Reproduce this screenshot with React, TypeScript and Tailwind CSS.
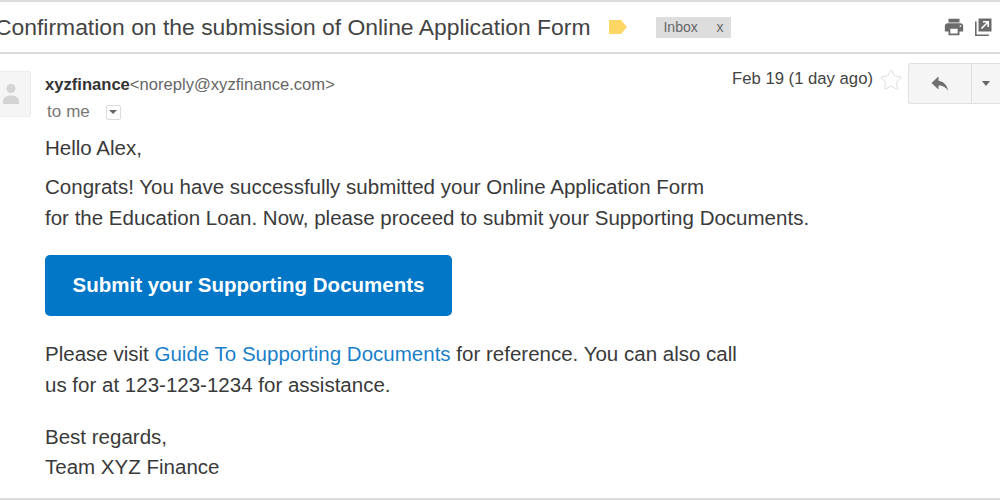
import { Star } from "lucide-react";

function PrintIcon() {
  return (
    <svg viewBox="0 0 24 24" className="h-[22px] w-[22px]" fill="#6b6b6b">
      <path d="M19 8H5c-1.66 0-3 1.34-3 3v6h4v4h12v-4h4v-6c0-1.66-1.34-3-3-3zm-3 11H8v-5h8v5zm3-7c-.55 0-1-.45-1-1s.45-1 1-1 1 .45 1 1-.45 1-1 1zm-1-9H6v4h12V3z" />
    </svg>
  );
}

function PopoutIcon() {
  return (
    <svg viewBox="0 0 17 18" className="h-[18px] w-[17px]" fill="none">
      <path d="M3.5 0.5h13v13h-13z" fill="#6b6b6b" />
      <path d="M0.8 3.5v13.7h13" stroke="#6b6b6b" strokeWidth="1.6" />
      <path d="M6.5 10.5 12.5 4.5M8 3.8h5.2V9" stroke="#fff" strokeWidth="1.6" />
    </svg>
  );
}

function ReplyIcon() {
  return (
    <svg viewBox="0 0 18 16" className="h-[16px] w-[18px]" fill="#6e6e6e">
      <path d="M7.5 0.5 0.5 7l7 6.5V9.6c4.2 0 7.2 1.4 9.5 5.4-.6-5.4-3.8-9.6-9.5-10.3z" />
    </svg>
  );
}

function Avatar() {
  return (
    <div className="flex h-[46px] w-[31px] shrink-0 items-center justify-start rounded-r-[2px] border border-l-0 border-[#ececec] bg-[#f5f5f5]">
      <svg viewBox="0 0 20 24" className="ml-[1px] h-[24px] w-[20px]" fill="#d4d4d4">
        <circle cx="10" cy="6.5" r="4.5" />
        <path d="M2 22v-3.5c0-3 4-5 8-5s8 2 8 5V22z" />
      </svg>
    </div>
  );
}

export default function App() {
  return (
    <div className="h-[500px] w-[1000px] overflow-hidden bg-white font-['Liberation_Sans',Arial,sans-serif] text-[#3a3a3a]">
      <header className="flex h-[54px] items-center border-y-2 border-[#dcdcdc] pr-[8px]">
        <h1 className="-ml-[5px] whitespace-nowrap text-[22.9px] font-normal text-[#444]">
          Confirmation on the submission of Online Application Form
        </h1>
        <svg viewBox="0 0 18 14" className="ml-[19px] h-[14px] w-[18px]" fill="#fdd663">
          <path d="M0 0h12l6 7-6 7H0z" />
        </svg>
        <div className="ml-[29px] flex h-[21px] w-[75px] items-center justify-between bg-[#dddddd] pl-[7px] pr-[8px] text-[14px] text-[#666]">
          <span>Inbox</span>
          <span>x</span>
        </div>
        <div className="ml-auto flex items-center gap-[10px]">
          <PrintIcon />
          <PopoutIcon />
        </div>
      </header>

      <div className="flex items-start pt-[9px]">
        <div className="pt-[8px]">
          <Avatar />
        </div>
        <div className="ml-[14px] pt-[12px]">
          <div className="whitespace-nowrap text-[16.6px] leading-[20px] text-[#666]">
            <span className="font-bold text-[#333]">xyzfinance</span>
            &lt;noreply@xyzfinance.com&gt;
          </div>
          <div className="ml-[2px] mt-[7px] flex items-center text-[17px] leading-[20px] text-[#777]">
            <span>to</span>
            <span className="ml-[5px]">me</span>
            <span className="ml-[16px] flex h-[15px] w-[15px] items-center justify-center rounded-[2px] border border-[#dcdcdc]">
              <span className="h-0 w-0 border-x-[4px] border-t-[4px] border-x-transparent border-t-[#666]" />
            </span>
          </div>
        </div>
        <div className="ml-auto flex items-start">
          <span className="mt-[6px] whitespace-nowrap text-[16.7px] leading-[20px] text-[#444]">
            Feb 19 (1 day ago)
          </span>
          <Star className="ml-[6px] mt-[5px] h-[24px] w-[24px] text-[#dedede]" strokeWidth={1} />
          <div className="ml-[5px] flex h-[41px] w-[92px] rounded-l-[3px] border border-r-0 border-[#e0e0e0] bg-[#f5f5f5]">
            <div className="flex w-[63px] items-center justify-center border-r border-[#e0e0e0]">
              <ReplyIcon />
            </div>
            <div className="flex flex-1 items-center justify-center">
              <span className="h-0 w-0 border-x-[4px] border-t-[5px] border-x-transparent border-t-[#666]" />
            </div>
          </div>
        </div>
      </div>

      <main className="pl-[45px] text-[20.52px] leading-[31px] text-[#3a3a3a]">
        <p className="mt-[10px]">Hello Alex,</p>
        <p className="mt-[8px]">
          Congrats! You have successfully submitted your Online Application Form
          <br />
          for the Education Loan. Now, please proceed to submit your Supporting Documents.
        </p>
        <div className="mt-[22px] flex h-[61px] w-[407px] items-center justify-center rounded-[5px] bg-[#0277c7] pb-[3px] text-[20.5px] font-bold text-white">
          Submit your Supporting Documents
        </div>
        <p className="mt-[22px]">
          Please visit <span className="text-[#1a7fc9]">Guide To Supporting Documents</span> for
          reference. You can also call
          <br />
          us for at 123-123-1234 for assistance.
        </p>
        <p className="mt-[22px] leading-[30px]">
          Best regards,
          <br />
          Team XYZ Finance
        </p>
      </main>
      <div className="mt-[16px] border-t-2 border-[#dcdcdc]" />
    </div>
  );
}
